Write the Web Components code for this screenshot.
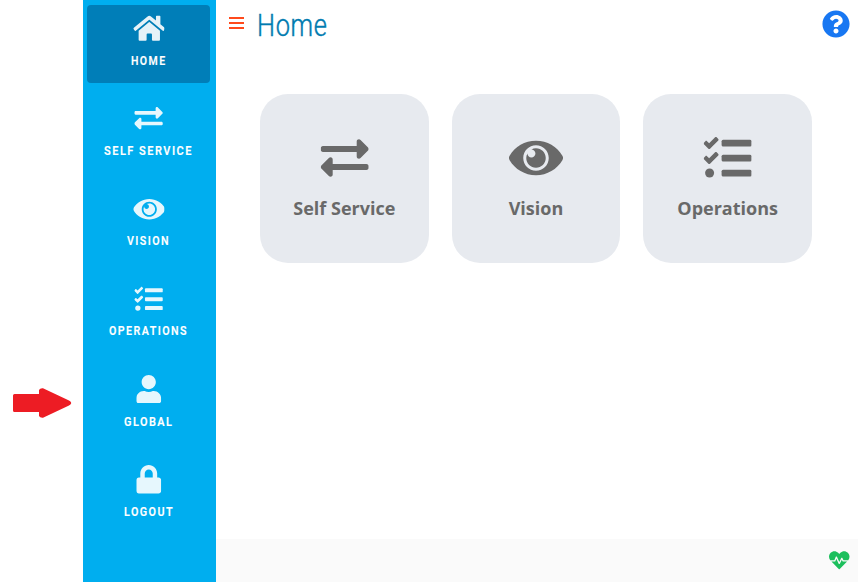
<!DOCTYPE html>
<html lang="en">
<head>
<meta charset="utf-8">
<title>Home</title>
<style>
html,body{margin:0;height:100%;overflow:hidden;background:#fff;font-family:"Open Sans","Noto Sans",sans-serif}
</style>
</head>
<body>
<home-page></home-page>
<script>
const check='M156.5 69l-72.2 72.2-15.6 15.6c-4.7 4.7-12.9 4.7-17.6 0L3.5 109.4c-4.7-4.7-4.7-12.3 0-17l15.7-15.7c4.7-4.7 12.3-4.7 17 0l22.7 22.1 63.7-63.3c4.7-4.7 12.3-4.7 17 0l17 16.5c4.6 4.7 4.6 12.3-.1 17z';
const ICONS={
home:[576,'<path d="M280.37 148.26L96 300.11V464a16 16 0 0 0 16 16l112.06-.29a16 16 0 0 0 15.92-16V368a16 16 0 0 1 16-16h64a16 16 0 0 1 16 16v95.64a16 16 0 0 0 16 16.05L464 480a16 16 0 0 0 16-16V300L295.67 148.26a12.19 12.19 0 0 0-15.3 0zM571.6 251.47L488 182.56V44.05a12 12 0 0 0-12-12h-56a12 12 0 0 0-12 12v72.61L318.47 43a48 48 0 0 0-61 0L4.34 251.47a12 12 0 0 0-1.6 16.9l25.5 31A12 12 0 0 0 45.15 301l235.22-193.74a12.19 12.19 0 0 1 15.3 0L530.9 301a12 12 0 0 0 16.9-1.6l25.5-31a12 12 0 0 0-1.7-16.93z"/>'],
exchange:[512,'<path d="M0 168v-16c0-13.255 10.745-24 24-24h360V80c0-21.367 25.899-32.042 40.971-16.971l80 80c9.372 9.373 9.372 24.569 0 33.941l-80 80C409.956 271.982 384 261.456 384 240v-48H24c-13.255 0-24-10.745-24-24zm488 152H128v-48c0-21.314-25.862-32.08-40.971-16.971l-80 80c-9.372 9.373-9.372 24.569 0 33.941l80 80C102.057 463.997 128 453.437 128 432v-48h360c13.255 0 24-10.745 24-24v-16c0-13.255-10.745-24-24-24z"/>'],
eye:[576,'<path d="M569.354 231.631C512.969 135.949 407.81 72 288 72 168.14 72 63.004 135.994 6.646 231.631a47.999 47.999 0 0 0 0 48.739C63.031 376.051 168.19 440 288 440c119.86 0 224.996-63.994 281.354-159.631a47.997 47.997 0 0 0 0-48.738zM288 392c-75.162 0-136-60.827-136-136 0-75.162 60.826-136 136-136 75.162 0 136 60.826 136 136 0 75.162-60.826 136-136 136zm104-136c0 57.438-46.562 104-104 104s-104-46.562-104-104c0-17.708 4.431-34.379 12.236-48.973l-.001.032c0 23.651 19.173 42.823 42.824 42.823s42.824-19.173 42.824-42.823c0-23.651-19.173-42.824-42.824-42.824l-.032.001C253.621 156.431 270.292 152 288 152c57.438 0 104 46.562 104 104z"/>'],
tasks:[512,`<path d="${check}"/><path transform="translate(0 160)" d="${check}"/><circle cx="64" cy="416" r="48"/><rect x="192" y="60" width="320" height="72" rx="16"/><rect x="192" y="220" width="320" height="72" rx="16"/><rect x="192" y="380" width="320" height="72" rx="16"/>`],
user:[448,'<path d="M224 256c70.7 0 128-57.3 128-128S294.7 0 224 0 96 57.3 96 128s57.3 128 128 128zm89.6 32h-16.7c-22.2 10.2-46.9 16-72.9 16s-50.6-5.8-72.9-16h-16.7C60.2 288 0 348.2 0 422.4V464c0 26.5 21.5 48 48 48h352c26.5 0 48-21.5 48-48v-41.6c0-74.2-60.2-134.4-134.4-134.4z"/>'],
lock:[448,'<path d="M400 224h-24v-72C376 68.2 307.8 0 224 0S72 68.2 72 152v72H48c-26.5 0-48 21.5-48 48v192c0 26.5 21.5 48 48 48h352c26.5 0 48-21.5 48-48V272c0-26.5-21.5-48-48-48zm-104 0H152v-72c0-39.7 32.3-72 72-72s72 32.3 72 72v72z"/>'],
help:[512,'<path d="M504 256c0 136.997-111.043 248-248 248S8 392.997 8 256C8 119.083 119.043 8 256 8s248 111.083 248 248zM262.655 90c-54.497 0-89.255 22.957-116.549 63.758-3.536 5.286-2.353 12.415 2.715 16.258l34.699 26.31c5.205 3.947 12.621 3.008 16.665-2.122 17.864-22.658 30.113-35.797 57.303-35.797 20.429 0 45.698 13.148 45.698 32.958 0 14.976-12.363 22.667-32.534 33.976C247.128 238.528 216 254.941 216 296v4c0 6.627 5.373 12 12 12h56c6.627 0 12-5.373 12-12v-1.333c0-28.462 83.186-29.647 83.186-106.667 0-58.002-60.165-102-116.531-102zM256 338c-25.365 0-46 20.635-46 46 0 25.364 20.635 46 46 46s46-20.636 46-46c0-25.365-20.635-46-46-46z"/>'],
heart:[512,'<path d="M320.2 243.8l-49.7 99.4c-6 12.1-23.4 11.7-28.9-.6l-56.9-126.3-30 71.7H60.6l182.5 186.5c7.1 7.3 18.6 7.3 25.7 0L451.4 288H342.3l-22.1-44.2zM473.7 73.9l-2.4-2.5c-51.5-52.6-135.8-52.6-187.4 0L256 100l-27.9-28.5c-51.5-52.7-135.9-52.7-187.4 0l-2.4 2.4C-10.4 123.7-12.5 203 31 256h102.4l35.9-86.2c5.4-12.9 23.6-13.1 29.2-.4l58.2 129.3 49-97.9c5.9-11.8 22.7-11.8 28.6 0l27.6 55.2H481c43.5-53 41.4-132.3-7.3-182.1z"/>']
};
function define(name,render){
  customElements.define(name,class extends HTMLElement{
    connectedCallback(){
      if(!this.shadowRoot)this.attachShadow({mode:'open'}).innerHTML=render(this);
    }
  });
}
const attr=(el,n,d='')=>el.getAttribute(n)||d;

define('ui-icon',el=>{
  const [w,body]=ICONS[attr(el,'name')],s=+attr(el,'size');
  return `<style>:host{display:block;flex:none}svg{display:block;fill:currentColor}</style>
  <svg width="${w/512*s}" height="${s}" viewBox="0 0 ${w} 512">${body}</svg>`;
});
/* One line of text condensed to a given width, like a narrow display face */
define('narrow-text',el=>{
  const w=+attr(el,'width'),s=+attr(el,'size'),h=Math.ceil(s*1.3);
  return `<style>:host{display:block;flex:none}svg{display:block;overflow:visible}
  text{font:${attr(el,'weight','500')} ${s}px Roboto,sans-serif;letter-spacing:${attr(el,'spacing','0')}px;fill:currentColor;stroke:currentColor;stroke-width:${attr(el,'stroke','0')}}</style>
  <svg width="${w}" height="${h}"><text x="0" y="${s}" textLength="${w}" lengthAdjust="spacingAndGlyphs">${attr(el,'text')}</text></svg>`;
});
define('nav-item',el=>`<style>
  :host{display:flex;flex-direction:column;align-items:center;box-sizing:border-box;height:78.25px;padding-top:9px;border-radius:4px;color:#fff}
  :host([active]){background:#007eb8}
  ui-icon{opacity:.9;transform:translateX(.3px)}
  narrow-text{margin-top:9.3px}
  </style><ui-icon name="${attr(el,'icon')}" size="28.44"></ui-icon>
  <narrow-text text="${attr(el,'label')}" width="${attr(el,'width')}" size="12.6" weight="600" stroke=".15" spacing="1.7"></narrow-text>`);
define('side-nav',()=>`<style>
  :host{display:flex;flex-direction:column;gap:12px;box-sizing:border-box;width:133px;padding:5px 6px 0 4px;background:#00aeef}
  </style><slot></slot>`);
define('tile-card',el=>`<style>
  :host{display:flex;flex-direction:column;align-items:center;box-sizing:border-box;height:169px;padding-top:40px;border-radius:28px;background:#e7eaef;color:#696969;font-size:18px;font-weight:700;line-height:24px}
  ui-icon{margin-bottom:13.5px}
  :host([icon=exchange]) ui-icon{transform:translateX(.7px)}
  :host([icon=tasks]) ui-icon{transform:translateX(-.4px)}
  </style><ui-icon name="${attr(el,'icon')}" size="48"></ui-icon><slot></slot>`);
define('page-header',()=>`<style>
  :host{display:flex;align-items:flex-start;height:94px;box-sizing:border-box;padding:0 8px 0 13px}
  .menu{display:flex;flex-direction:column;gap:3px;width:15px;margin-top:17px}
  .menu i{height:2px;background:#ff4a1c}
  narrow-text{margin:5px 0 0 12.7px;color:#007bb0}
  .help{margin:9.5px 0 0 auto;color:#1877f2}
  </style><div class="menu"><i></i><i></i><i></i></div>
  <narrow-text text="Home" width="70.5" size="31" weight="300" stroke=".45" spacing=".8"></narrow-text>
  <ui-icon class="help" name="help" size="28"></ui-icon>`);
define('page-footer',()=>`<style>
  :host{display:flex;align-items:center;justify-content:flex-end;height:43px;box-sizing:border-box;padding-right:8.5px;background:#fafafa;color:#1cbf5c}
  </style><ui-icon name="heart" size="20.5"></ui-icon>`);
define('pointer-arrow',()=>`<style>:host{display:block;width:59px;height:30px}svg{display:block}</style>
  <svg width="59" height="30" viewBox="0 0 59 30"><path d="M1.5 6H26V2Q27 0 30 0.3L56 12.5Q60.5 15 56 17.5L30 29.7Q27 30 26 28V24H1.5Q0 24 0 22.5V7.5Q0 6 1.5 6Z" fill="#ed1c24"/></svg>`);
define('home-page',()=>`<style>
  :host{display:grid;grid-template-columns:83px 133px 1fr;width:858px;height:582px;background:#fff}
  .gutter{padding:388px 0 0 13px}
  main{display:flex;flex-direction:column}
  .tiles{display:grid;grid-template-columns:repeat(3,168.67px);gap:23px;padding-left:44px;flex:1;align-items:start}
  </style>
  <div class="gutter"><pointer-arrow></pointer-arrow></div>
  <side-nav>
    <nav-item active icon="home" label="HOME" width="35.5"></nav-item>
    <nav-item icon="exchange" label="SELF SERVICE" width="89"></nav-item>
    <nav-item icon="eye" label="VISION" width="43"></nav-item>
    <nav-item icon="tasks" label="OPERATIONS" width="79"></nav-item>
    <nav-item icon="user" label="GLOBAL" width="49.5"></nav-item>
    <nav-item icon="lock" label="LOGOUT" width="50"></nav-item>
  </side-nav>
  <main>
    <page-header></page-header>
    <div class="tiles">
      <tile-card icon="exchange">Self Service</tile-card>
      <tile-card icon="eye">Vision</tile-card>
      <tile-card icon="tasks">Operations</tile-card>
    </div>
    <page-footer></page-footer>
  </main>`);
</script>
</body>
</html>
